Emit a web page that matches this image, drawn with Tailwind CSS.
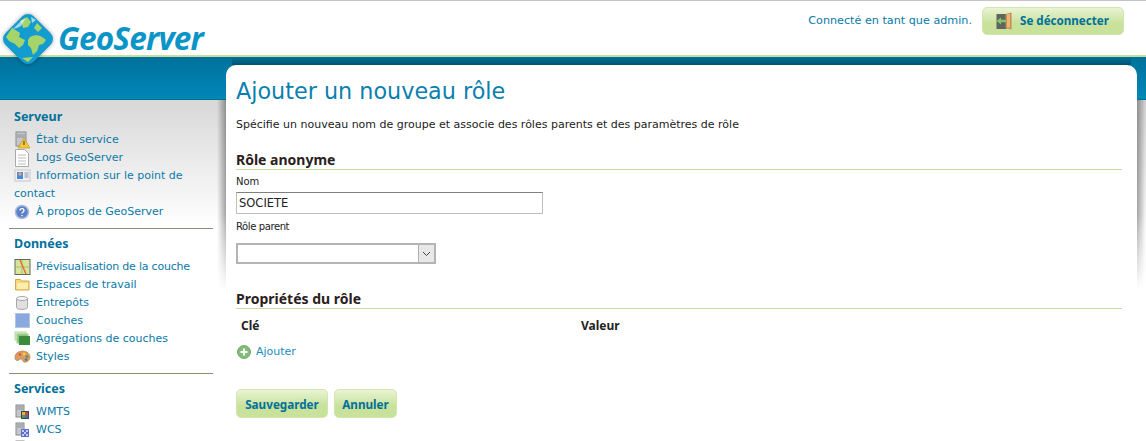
<!DOCTYPE html>
<html lang="fr">
  <head>
    <meta charset="UTF-8" />
    <title>GeoServer</title>
    <script src="https://cdn.jsdelivr.net/npm/@tailwindcss/browser@4"></script>
  </head>
  <body class="h-[441px] overflow-hidden bg-white text-[11px] leading-[18px] text-[#222] [font-family:'DejaVu_Sans',sans-serif]">
    <!-- Header -->
    <header class="relative flex h-[57px] items-start justify-end border-t border-[#c4c4c4] border-b-2 border-b-[#c9de9c] pr-[22px]">
      <a class="absolute left-[3px] top-[13px] z-10 flex items-start">
        <svg width="50" height="50" viewBox="0 0 50 50" class="drop-shadow-[0_0_2px_rgba(0,0,0,0.35)]">
          <rect x="5" y="5" width="40" height="40" rx="8" transform="rotate(45 25 25)" fill="#139cd0" />
          <path d="M3 23l6-9 5 3 3 2-1 4 6 3-2 5-4 3-4-4-6-3zM27 23c6-3 11-2 16 3l-3 4-4 1-2 6-4 4-2-7-3-3 0-5zM17 7l7-4 4 5-3 5-5 1-1-4zM34 9l5 5-4 4-4-4zM19 44l11-1-5 5z" fill="#a5d46a" />
          <path d="M10 15l9-9 4-2-5 8-4 2zM28 3l5 3-4 3z" fill="#e6f4f8" opacity=".7" />
        </svg>
        <span class="ml-[5px] mt-[1px] text-[31.5px] leading-[46px] font-bold italic tracking-[-0.8px] text-[#0a94c8] [font-family:'Open_Sans',sans-serif]">GeoServer</span>
      </a>
      <span class="mt-[11px] mr-[10px] text-[11.2px] text-[#0a7aa8]">Connecté en tant que admin.</span>
      <a class="mt-[6px] flex h-[28px] w-[142px] items-center rounded-[5px] border border-[#d3e5b0] bg-linear-to-b from-[#e9f3d3] to-[#c8e19b] to-60% pl-[13px] text-[11.6px] font-bold whitespace-nowrap text-[#00709c] [font-family:'Noto_Sans',sans-serif]">
        <svg width="16" height="18" viewBox="0 0 16 18" class="mr-[8px]">
          <rect x="0.500" y="2" width="10" height="15" fill="#5f645e" />
          <path d="M9.500 2l6-1.500v17l-6-1.500z" fill="#c98a4c" />
          <rect x="11" y="2" width="3" height="13.500" fill="#e9b67c" />
          <path d="M0.500 9l4.500-3.500v2.200h5v2.600H5v2.200z" fill="#7fc86a" />
        </svg>
        Se déconnecter
      </a>
    </header>

    <div class="flex h-[383px] bg-[linear-gradient(to_bottom,#00719c_0,#0087b8_42px,#006c90_42px,#006c90_43px,#d8d8d8_43px,#ffffff_170px)] bg-no-repeat">
      <!-- Sidebar -->
      <nav class="w-[226px] shrink-0 pt-[51px] pl-[14px] text-[#0a7aa8]">
        <h3 class="mb-[5px] text-[12.5px] font-bold text-[#00709c] [font-family:'Noto_Sans',sans-serif]">Serveur</h3>
        <ul>
          <li>
            <svg width="18" height="18" viewBox="0 0 18 18" class="mr-[4px] inline-block align-top">
              <rect x="2" y="1" width="10" height="14" fill="#c4c8cc" stroke="#8a8a8a" />
              <path d="M3 4h8M3 6h8" stroke="#8f949a" />
              <path d="M10 7l6 10H4z" fill="#f6c93c" stroke="#b98a1c" stroke-width=".6" />
              <rect x="9.500" y="10" width="1" height="4" fill="#333" />
            </svg>État du service
          </li>
          <li>
            <svg width="18" height="18" viewBox="0 0 18 18" class="mr-[4px] inline-block align-top">
              <path d="M1.500 .5h9l4 4v13h-13z" fill="#fff" stroke="#aaa" />
              <path d="M4 6h8M4 9h8M4 12h8M4 15h8" stroke="#bbb" />
            </svg>Logs GeoServer
          </li>
          <li>
            <svg width="18" height="18" viewBox="0 0 18 18" class="mr-[4px] inline-block align-top">
              <rect x="1" y="3" width="15" height="11" fill="#eef0f4" stroke="#c4c8d0" />
              <rect x="3" y="5" width="6" height="7" fill="#4c88d8" />
              <circle cx="6" cy="7" r="1.700" fill="#e8a070" />
              <path d="M10.500 6h4M10.500 8h4M10.500 10h4" stroke="#8a94a4" />
            </svg>Information sur le point de contact
          </li>
          <li>
            <svg width="18" height="18" viewBox="0 0 18 18" class="mr-[4px] inline-block align-top">
              <circle cx="8" cy="9" r="6.500" fill="#5c80c8" stroke="#aabbdd" stroke-width="1.500" />
              <path d="M6 7.500c0-2.500 4-2.500 4 0 0 1.500-2 1.500-2 3M8 12v1.200" fill="none" stroke="#fff" stroke-width="1.300" />
            </svg>À propos de GeoServer
          </li>
        </ul>
        <hr class="mt-[7px] mr-[13px] -ml-[5px] border-[#8e8e78]" />
        <h3 class="mt-[6px] mb-[5px] text-[12.5px] font-bold text-[#00709c] [font-family:'Noto_Sans',sans-serif]">Données</h3>
        <ul>
          <li class="tracking-[-0.2px]">
            <svg width="18" height="18" viewBox="0 0 18 18" class="mr-[4px] inline-block align-top">
              <rect x="1" y="1.500" width="15" height="15" fill="#d8e49c" stroke="#5c6c58" />
              <path d="M2 9h13M8 2v14" stroke="#a8c070" />
              <path d="M6 2l6 14" stroke="#e86a3c" stroke-width="1.500" />
            </svg>Prévisualisation de la couche
          </li>
          <li>
            <svg width="18" height="18" viewBox="0 0 18 18" class="mr-[4px] inline-block align-top">
              <path d="M1.500 3.500h5l1 1.500h7.500v9h-13.500z" fill="#f8d878" stroke="#d8a848" />
              <rect x="3" y="7" width="11" height="6" fill="#fdeeb0" />
            </svg>Espaces de travail
          </li>
          <li>
            <svg width="18" height="18" viewBox="0 0 18 18" class="mr-[4px] inline-block align-top">
              <path d="M2.500 4.500v9c0 2.500 11 2.500 11 0v-9z" fill="#e0e0e0" stroke="#aaa" />
              <ellipse cx="8" cy="4.500" rx="5.500" ry="2" fill="#f6f6f6" stroke="#aaa" />
            </svg>Entrepôts
          </li>
          <li>
            <svg width="18" height="18" viewBox="0 0 18 18" class="mr-[4px] inline-block align-top">
              <rect x="1.500" y="1.500" width="14" height="14" fill="#8aa8e0" stroke="#b4c4e4" />
            </svg>Couches
          </li>
          <li>
            <svg width="18" height="18" viewBox="0 0 18 18" class="mr-[4px] inline-block align-top">
              <rect x="1" y="2" width="11" height="8" fill="#d4ecc8" stroke="#b4dca4" />
              <rect x="3" y="4" width="11" height="9" fill="#8cc47c" stroke="#a4d094" />
              <rect x="5" y="6" width="11" height="9" fill="#3c8a3c" />
            </svg>Agrégations de couches
          </li>
          <li>
            <svg width="18" height="18" viewBox="0 0 18 18" class="mr-[4px] inline-block align-top">
              <path d="M1 9c0-4 4-6 8-6s7 3 7 6-3 6-6 5c-2-.5-1-3-3-3s-2 2-4 1.500S1 11 1 9z" fill="#d89c60" stroke="#b07840" stroke-width=".6" />
              <circle cx="6" cy="6.500" r="1.300" fill="#e84c3c" />
              <circle cx="10" cy="6" r="1.300" fill="#f4d43c" />
              <circle cx="13" cy="8.500" r="1.300" fill="#4c9c4c" />
              <circle cx="12" cy="11.500" r="1.300" fill="#4c6cc8" />
            </svg>Styles
          </li>
        </ul>
        <hr class="mt-[7px] mr-[13px] -ml-[5px] border-[#8e8e78]" />
        <h3 class="mt-[6px] mb-[5px] text-[12.5px] font-bold text-[#00709c] [font-family:'Noto_Sans',sans-serif]">Services</h3>
        <ul>
          <li>
            <svg width="18" height="18" viewBox="0 0 18 18" class="mr-[4px] inline-block align-top">
              <rect x="2" y="2" width="8" height="12" fill="#c4c8cc" stroke="#8a8a8a" />
              <path d="M3 4h6M3 6h6" stroke="#8f949a" />
              <rect x="7" y="8" width="8" height="8" fill="#444" />
              <path d="M8 9h3v3H8z" fill="#d8b83c" />
              <path d="M11 9h3v3h-3z" fill="#c84c3c" />
              <path d="M8 12h3v3H8z" fill="#4c9c4c" />
              <path d="M11 12h3v3h-3z" fill="#4c6cc8" />
            </svg>WMTS
          </li>
          <li>
            <svg width="18" height="18" viewBox="0 0 18 18" class="mr-[4px] inline-block align-top">
              <rect x="2" y="2" width="8" height="12" fill="#c4c8cc" stroke="#8a8a8a" />
              <path d="M3 4h6M3 6h6" stroke="#8f949a" />
              <rect x="7" y="8" width="8" height="8" fill="#5c6cd0" />
              <path d="M8 9h2v2H8zM12 9h2v2h-2zM10 11h2v2h-2zM8 13h2v2H8zM12 13h2v2h-2z" fill="#c4ccf0" />
            </svg>WCS
          </li>
          <li class="h-[18px]">
            <svg width="18" height="18" viewBox="0 0 18 18" class="mr-[4px] inline-block align-top">
              <rect x="2" y="2" width="8" height="12" fill="#c4c8cc" stroke="#8a8a8a" />
            </svg>
          </li>
        </ul>
      </nav>

      <!-- Main card -->
      <main class="relative mt-[8px] mb-0 w-[911px] shrink-0 rounded-t-[10px] bg-white pl-[10px] pr-[15px]">
        <span class="absolute -top-[8px] left-[6px] right-[6px] h-[8px] bg-linear-to-t from-black/30 to-transparent"></span>
        <span class="absolute top-[35px] -left-[9px] h-[190px] w-[9px] bg-linear-to-l from-black/35 to-transparent [mask-image:linear-gradient(#000_60%,transparent)]"></span>
        <span class="absolute top-[35px] -right-[9px] h-[190px] w-[9px] bg-linear-to-r from-black/35 to-transparent [mask-image:linear-gradient(#000_60%,transparent)]"></span>

        <h1 class="mt-[9px] text-[22.3px] leading-[34px] text-[#0a7fb0]">Ajouter un nouveau rôle</h1>
        <p class="mt-[8px]">Spécifie un nouveau nom de groupe et associe des rôles parents et des paramètres de rôle</p>

        <h2 class="mt-[17px] border-b border-[#c9de9c] text-[14px] leading-[18px] font-bold text-[#2a2020] [font-family:'Noto_Sans',sans-serif]">Rôle anonyme</h2>
        <label class="mt-[4px] block text-[10px] leading-[16px]">Nom</label>
        <input value="SOCIETE" class="mt-[2px] block h-[22px] w-[307px] border border-[#bdbdbd] border-t-[#808080] pl-[2px] text-[11.5px] outline-none" />
        <label class="mt-[5px] block text-[10px] leading-[16px] tracking-[-0.4px]">Rôle parent</label>
        <div class="mt-[8px] flex h-[21px] w-[200px] border-2 border-[#b4b4b4]">
          <span class="flex-1"></span>
          <span class="flex w-[16px] items-center justify-center border-l border-[#b0b0b0] bg-[#e8e8e8]">
            <svg width="9" height="6" viewBox="0 0 9 6"><path d="M1 1l3.500 3.500L8 1" fill="none" stroke="#444" /></svg>
          </span>
        </div>

        <h2 class="mt-[25px] border-b border-[#c9de9c] text-[14px] leading-[19px] font-bold text-[#2a2020] [font-family:'Noto_Sans',sans-serif]">Propriétés du rôle</h2>
        <div class="mt-[8px] flex pl-[5px] text-[12px] font-bold text-[#222] [font-family:'Noto_Sans',sans-serif]">
          <span class="w-[340px]">Clé</span>
          <span>Valeur</span>
        </div>
        <a class="mt-[8px] flex items-center text-[#1a8cbc]">
          <svg width="16" height="16" viewBox="0 0 16 16" class="mr-[4px]">
            <circle cx="8" cy="8" r="6.500" fill="#7cc070" stroke="#8a9c88" />
            <path d="M8 4.500v7M4.500 8h7" stroke="#fff" stroke-width="2" />
          </svg>
          Ajouter
        </a>
        <div class="mt-[28px] flex gap-[6px] [font-family:'Noto_Sans',sans-serif]">
          <a class="flex h-[29px] w-[92px] items-center justify-center rounded-[5px] border border-[#d3e5b0] bg-linear-to-b from-[#e9f3d3] to-[#c8e19b] to-60% text-[11.7px] font-bold text-[#00709c]">Sauvegarder</a>
          <a class="flex h-[29px] w-[63px] items-center justify-center rounded-[5px] border border-[#d3e5b0] bg-linear-to-b from-[#e9f3d3] to-[#c8e19b] to-60% text-[11.7px] font-bold text-[#00709c]">Annuler</a>
        </div>
      </main>
    </div>
  </body>
</html>
